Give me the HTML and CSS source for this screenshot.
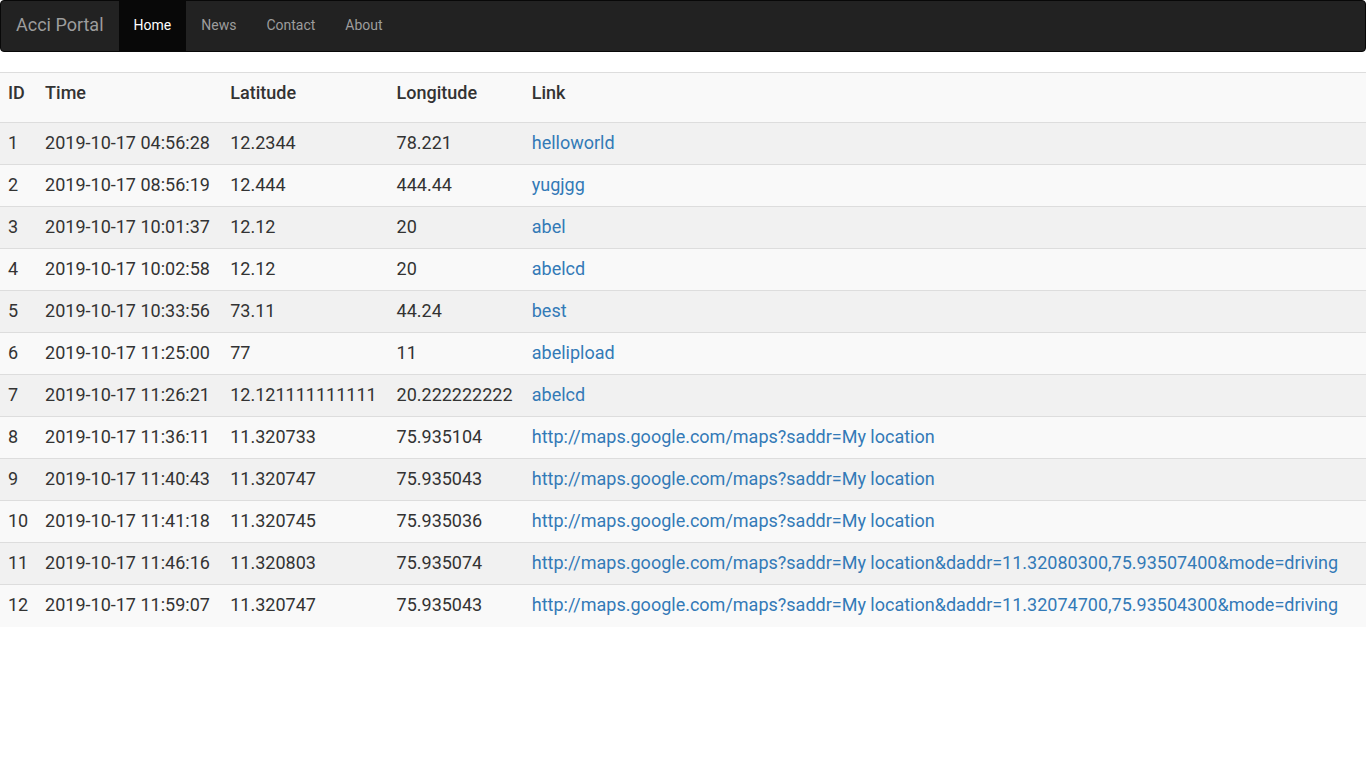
FILE: index.html
```html
<!DOCTYPE html>
<html>
<head>
<meta charset="utf-8">
<title>Acci Portal</title>
<link rel="stylesheet" href="styles.css">
</head>
<body>
<nav class="navbar">
  <a class="brand" href="#">Acci Portal</a>
  <ul class="nav">
    <li class="active"><a href="#">Home</a></li>
    <li><a href="#">News</a></li>
    <li><a href="#">Contact</a></li>
    <li><a href="#">About</a></li>
  </ul>
</nav>
<div class="table-wrap">
<table class="data">
  <thead>
    <tr><th>ID</th><th>Time</th><th>Latitude</th><th>Longitude</th><th>Link</th></tr>
  </thead>
  <tbody>
    <tr><td>1</td><td>2019-10-17 04:56:28</td><td>12.2344</td><td>78.221</td><td><a href="#">helloworld</a></td></tr>
    <tr><td>2</td><td>2019-10-17 08:56:19</td><td>12.444</td><td>444.44</td><td><a href="#">yugjgg</a></td></tr>
    <tr><td>3</td><td>2019-10-17 10:01:37</td><td>12.12</td><td>20</td><td><a href="#">abel</a></td></tr>
    <tr><td>4</td><td>2019-10-17 10:02:58</td><td>12.12</td><td>20</td><td><a href="#">abelcd</a></td></tr>
    <tr><td>5</td><td>2019-10-17 10:33:56</td><td>73.11</td><td>44.24</td><td><a href="#">best</a></td></tr>
    <tr><td>6</td><td>2019-10-17 11:25:00</td><td>77</td><td>11</td><td><a href="#">abelipload</a></td></tr>
    <tr><td>7</td><td>2019-10-17 11:26:21</td><td>12.121111111111</td><td>20.222222222</td><td><a href="#">abelcd</a></td></tr>
    <tr><td>8</td><td>2019-10-17 11:36:11</td><td>11.320733</td><td>75.935104</td><td><a href="#">http://maps.google.com/maps?saddr=My location</a></td></tr>
    <tr><td>9</td><td>2019-10-17 11:40:43</td><td>11.320747</td><td>75.935043</td><td><a href="#">http://maps.google.com/maps?saddr=My location</a></td></tr>
    <tr><td>10</td><td>2019-10-17 11:41:18</td><td>11.320745</td><td>75.935036</td><td><a href="#">http://maps.google.com/maps?saddr=My location</a></td></tr>
    <tr><td>11</td><td>2019-10-17 11:46:16</td><td>11.320803</td><td>75.935074</td><td><a href="#">http://maps.google.com/maps?saddr=My location&amp;daddr=11.32080300,75.93507400&amp;mode=driving</a></td></tr>
    <tr><td>12</td><td>2019-10-17 11:59:07</td><td>11.320747</td><td>75.935043</td><td><a href="#">http://maps.google.com/maps?saddr=My location&amp;daddr=11.32074700,75.93504300&amp;mode=driving</a></td></tr>
  </tbody>
</table>
</div>
</body>
</html>
```
FILE: styles.css
```css
* { box-sizing: border-box; }
html, body { margin: 0; padding: 0; }
body {
  font-family: Roboto, "Liberation Sans", Arial, sans-serif;
  font-size: 14px;
  color: #333;
  background: #fff;
}
a { text-decoration: none; }

.navbar {
  display: flex;
  align-items: stretch;
  height: 52px;
  background: #222;
  border: 1px solid #080808;
  border-radius: 4px;
  margin-bottom: 20px;
}
.brand {
  font-size: 18px;
  line-height: 20px;
  padding: 14px 15px 16px;
  color: #9d9d9d;
}
.nav {
  display: flex;
  list-style: none;
  margin: 0;
  padding: 0;
}
.nav li a {
  display: block;
  padding: 14px 15px 16px;
  line-height: 20px;
  font-size: 14px;
  color: #9d9d9d;
}
.nav li.active a {
  background: #080808;
  color: #fff;
}

.table-wrap {
  box-shadow: 0 10px 8px -6px rgba(0, 0, 0, 0.16);
}
.data {
  width: 100%;
  border-collapse: collapse;
  font-size: 18px;
  background: #f9f9f9;
}
.data th,
.data td {
  text-align: left;
  padding: 9px 8px 11px;
  line-height: 21px;
  white-space: nowrap;
}
.data th {
  font-weight: 500;
  padding-top: 9px;
  padding-bottom: 19px;
  border-top: 1px solid #ddd;
  border-bottom: 1px solid #ddd;
}
.data td {
  border-bottom: 1px solid #ddd;
}
.data tbody tr:last-child td { border-bottom-color: transparent; }
.data tbody tr:nth-child(odd) { background: #f1f1f1; }
.data tbody tr:nth-child(even) { background: #f9f9f9; }
.data td a { color: #337ab7; }
```
